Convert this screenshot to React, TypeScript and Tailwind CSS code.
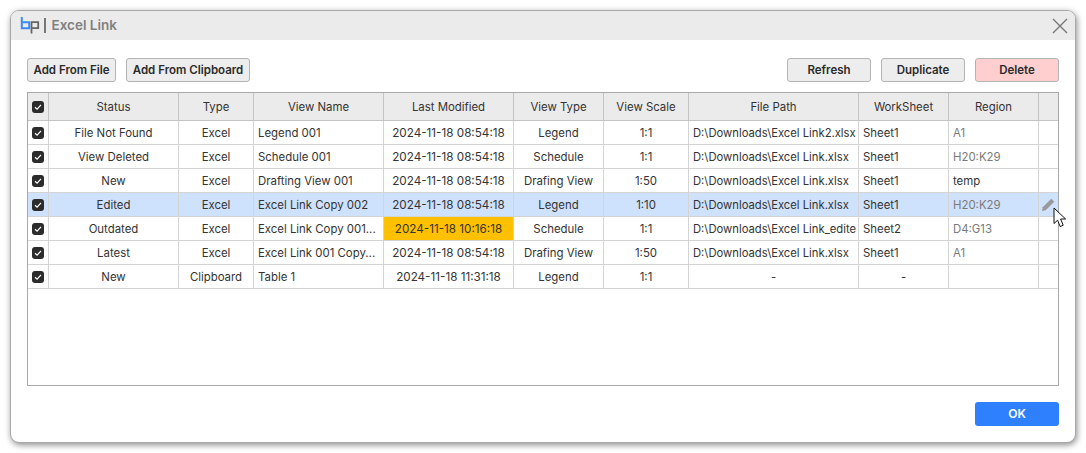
import React from 'react';

const COLUMNS = 'grid-cols-[21px_130px_75px_130px_130px_90px_85px_170px_90px_90px_19px]';

const HEADERS = ['Status', 'Type', 'View Name', 'Last Modified', 'View Type', 'View Scale', 'File Path', 'WorkSheet', 'Region'];

const ROWS = [
  { status: 'File Not Found', type: 'Excel', name: 'Legend 001', modified: '2024-11-18 08:54:18', viewType: 'Legend', scale: '1:1', path: 'D:\\Downloads\\Excel Link2.xlsx', sheet: 'Sheet1', region: 'A1', dim: true },
  { status: 'View Deleted', type: 'Excel', name: 'Schedule 001', modified: '2024-11-18 08:54:18', viewType: 'Schedule', scale: '1:1', path: 'D:\\Downloads\\Excel Link.xlsx', sheet: 'Sheet1', region: 'H20:K29', dim: true },
  { status: 'New', type: 'Excel', name: 'Drafting View 001', modified: '2024-11-18 08:54:18', viewType: 'Drafing View', scale: '1:50', path: 'D:\\Downloads\\Excel Link.xlsx', sheet: 'Sheet1', region: 'temp', dim: false },
  { status: 'Edited', type: 'Excel', name: 'Excel Link Copy 002', modified: '2024-11-18 08:54:18', viewType: 'Legend', scale: '1:10', path: 'D:\\Downloads\\Excel Link.xlsx', sheet: 'Sheet1', region: 'H20:K29', dim: true, selected: true },
  { status: 'Outdated', type: 'Excel', name: 'Excel Link Copy 001...', modified: '2024-11-18 10:16:18', viewType: 'Schedule', scale: '1:1', path: 'D:\\Downloads\\Excel Link_edite', sheet: 'Sheet2', region: 'D4:G13', dim: true, outdated: true },
  { status: 'Latest', type: 'Excel', name: 'Excel Link 001 Copy...', modified: '2024-11-18 08:54:18', viewType: 'Drafing View', scale: '1:50', path: 'D:\\Downloads\\Excel Link.xlsx', sheet: 'Sheet1', region: 'A1', dim: true },
  { status: 'New', type: 'Clipboard', name: 'Table 1', modified: '2024-11-18 11:31:18', viewType: 'Legend', scale: '1:1', path: '-', sheet: '-', region: '', dim: false, centered: true },
];

function Check() {
  return (
    <span className="w-3 h-3 rounded-[3px] bg-[#2b2b2b] flex items-center justify-center">
      <svg width="8" height="8" viewBox="0 0 8 8" fill="none">
        <path d="M1 4.2 L3.1 6.2 L7 1.8" stroke="white" strokeWidth="1.2" />
      </svg>
    </span>
  );
}

function Btn({ label, className }: { label: string; className: string }) {
  return (
    <button className={`h-6 pt-[2px] rounded-[3px] border border-[#b4b4b4] text-[11.5px] font-semibold text-[#2b2b2b] ${className}`}>
      {label}
    </button>
  );
}

export default function App() {
  return (
    <div className="w-[1086px] h-[453px] bg-white pt-[10px] pl-[10px] font-['Inter',sans-serif] text-[11.4px] text-[#333]">
      <div className="relative w-[1066px] h-[433px] rounded-[9px] border border-[#a8a8a8] bg-white flex flex-col overflow-hidden shadow-[1px_2px_6px_rgba(0,0,0,0.45)]">
        {/* Title bar */}
        <div className="h-[29px] shrink-0 bg-[#ebebeb] flex items-center justify-between pl-[9px] pr-[6px]">
          <div className="flex items-center">
            <svg width="20" height="19" viewBox="0 0 20 19" fill="none">
              <path d="M11.5 17.5 V6.2 H18.2 V12.2 H11.5" stroke="#666" strokeWidth="1.8" />
              <path d="M1.8 1 V12.2 H9.2 V6.2 H1.8" stroke="#3d8bf0" strokeWidth="2" />
            </svg>
            <span className="ml-[4px] w-[1.5px] h-[15px] bg-[#777]" />
            <span className="ml-[6px] text-[13.5px] font-semibold text-[#808080]">Excel Link</span>
          </div>
          <svg width="18" height="18" viewBox="0 0 18 18" fill="none">
            <path d="M2 2 L16 16 M16 2 L2 16" stroke="#777" strokeWidth="1.4" />
          </svg>
        </div>

        {/* Toolbar */}
        <div className="flex justify-between pl-4 pr-4 pt-[18px] pb-[10px]">
          <div className="flex gap-[10px]">
            <Btn label="Add From File" className="w-[89px] bg-[#ededed]" />
            <Btn label="Add From Clipboard" className="w-[124px] bg-[#ededed]" />
          </div>
          <div className="flex gap-[10px]">
            <Btn label="Refresh" className="w-[84px] bg-[#ededed]" />
            <Btn label="Duplicate" className="w-[84px] bg-[#ededed]" />
            <Btn label="Delete" className="w-[84px] bg-[#ffcfcf]" />
          </div>
        </div>

        {/* Table */}
        <div className="ml-4 w-[1032px] h-[294px] border border-[#a8a8a8] bg-white">
          <div className={`grid ${COLUMNS} h-[28px] bg-[#ebebeb] border-b border-[#c4c4c4]`}>
            <div className="flex items-center justify-center border-r border-[#c4c4c4]"><Check /></div>
            {HEADERS.map((h) => (
              <div key={h} className="flex items-center justify-center pt-[2px] border-r border-[#c4c4c4]">{h}</div>
            ))}
            <div />
          </div>
          {ROWS.map((row, i) => (
            <div key={i} className={`grid ${COLUMNS} h-6 border-b border-[#d4d4d4] ${row.selected ? 'bg-[#cfe2fd]' : ''}`}>
              <div className="flex items-center justify-center border-r border-[#d4d4d4]"><Check /></div>
              <div className="flex items-center justify-center pt-[2px] border-r border-[#d4d4d4]">{row.status}</div>
              <div className="flex items-center justify-center pt-[2px] border-r border-[#d4d4d4]">{row.type}</div>
              <div className="flex items-center px-1 pt-[2px] border-r border-[#d4d4d4] whitespace-nowrap">{row.name}</div>
              <div className={`flex items-center justify-center pt-[2px] text-[11.7px] border-r border-[#d4d4d4] ${row.outdated ? 'bg-[#ffc000]' : ''}`}>{row.modified}</div>
              <div className="flex items-center justify-center pt-[2px] border-r border-[#d4d4d4]">{row.viewType}</div>
              <div className="flex items-center justify-center pt-[2px] border-r border-[#d4d4d4]">{row.scale}</div>
              <div className={`flex items-center px-1 pt-[2px] text-[11.25px] border-r border-[#d4d4d4] whitespace-nowrap ${row.centered ? 'justify-center' : ''}`}>{row.path}</div>
              <div className={`flex items-center px-1 pt-[2px] border-r border-[#d4d4d4] ${row.centered ? 'justify-center' : ''}`}>{row.sheet}</div>
              <div className={`flex items-center px-1 pt-[2px] border-r border-[#d4d4d4] ${row.dim ? 'text-[#7a7a7a]' : ''}`}>{row.region}</div>
              <div className="flex items-center justify-center">
                {row.selected && (
                  <svg width="15" height="15" viewBox="0 0 14 14" fill="#9a9a9a">
                    <path d="M1 13 L1.6 9.6 L9.6 1.6 L12.4 4.4 L4.4 12.4 Z" />
                  </svg>
                )}
              </div>
            </div>
          ))}
        </div>

        {/* Footer */}
        <div className="flex justify-end pr-4 pt-4">
          <button className="w-[84px] h-6 rounded-[3px] bg-[#2f80ff] text-white text-[12px] font-semibold">OK</button>
        </div>

        {/* Mouse pointer over the edit icon */}
        <svg className="absolute left-[1042px] top-[196px]" width="14" height="21" viewBox="0 0 14 21">
          <path d="M1 1 V16.5 L4.6 13.2 L7.2 19.6 L10.2 18.2 L7.6 12 H12.6 Z" fill="white" stroke="#111" strokeWidth="1" />
        </svg>
      </div>
    </div>
  );
}
